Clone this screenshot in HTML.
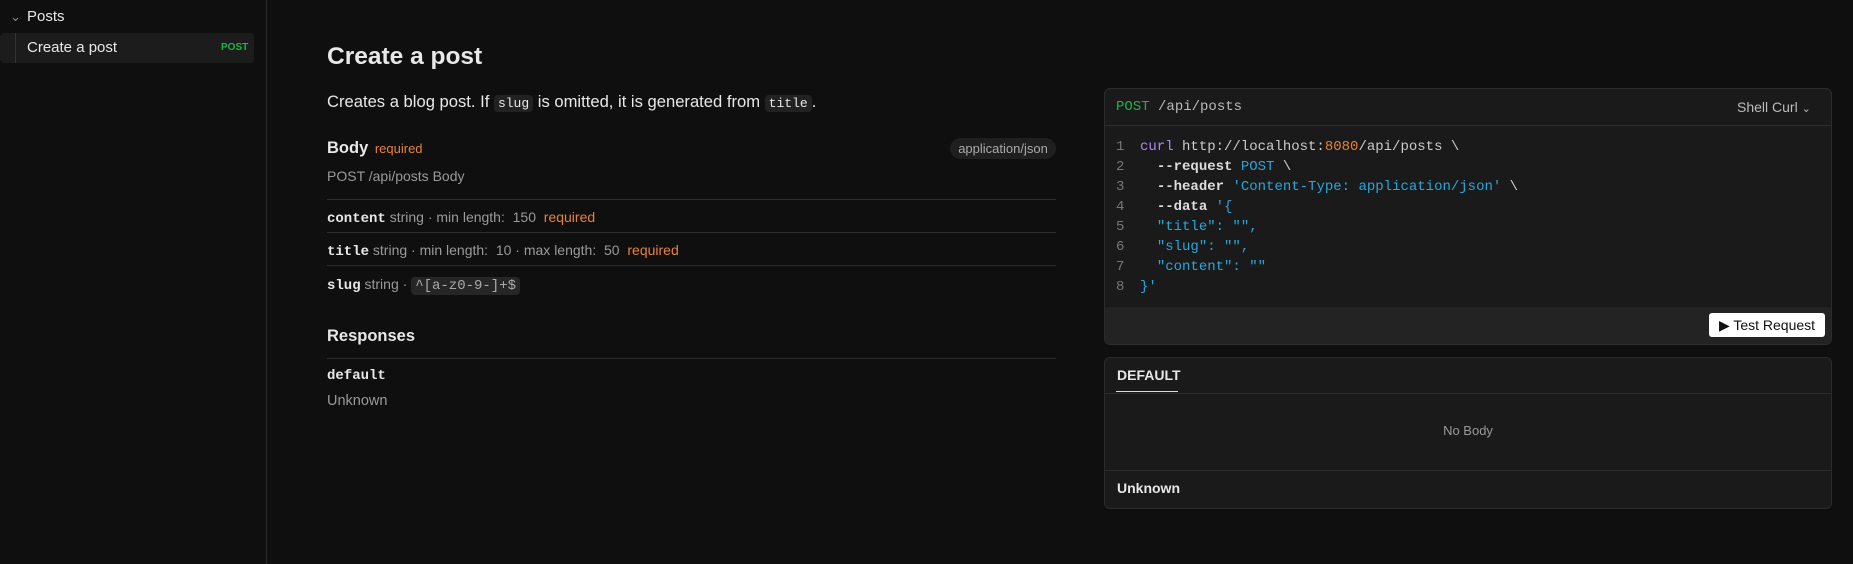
<!DOCTYPE html>
<html><head><meta charset="utf-8"><style>
*{box-sizing:border-box;margin:0;padding:0}
body{width:1853px;height:564px;background:#0f0f0f;color:#e8e8e8;font-family:"Liberation Sans",sans-serif;position:relative;overflow:hidden}
.a{position:absolute;white-space:nowrap}
.m{font-family:"Liberation Mono",monospace}
.mut{color:#9a9a9a}
.or{color:#e8823a}
.hr{position:absolute;height:1px;background:#2e2e2e}
code{font-family:"Liberation Mono",monospace;background:#222;border-radius:4px;padding:1px 4px;font-size:13px}
.cl{position:absolute;left:1116px;font-family:"Liberation Mono",monospace;font-size:14px;line-height:20px;white-space:pre;color:#ccc}
.ln{color:#777;display:inline-block;width:24px}
.b{color:#2aa6dc}
</style></head><body>
<div class="a" style="left:266px;top:0;width:1px;height:564px;background:#2a2a2a"></div>
<div class="a" style="left:10px;top:8px;line-height:18px;font-size:13px;color:#888">&#8964;</div>
<div class="a" style="left:27px;top:8px;line-height:18px;font-size:15px">Posts</div>
<div class="a" style="left:0;top:33px;width:254px;height:30px;background:#1c1c1c;border-radius:4px"></div>
<div class="a" style="left:15px;top:33px;width:1px;height:30px;background:#333"></div>
<div class="a" style="left:27px;top:39px;line-height:18px;font-size:15px">Create a post</div>
<div class="a" style="left:221px;top:41px;line-height:14px;font-size:10px;font-weight:bold;color:#22b24c">POST</div>

<div class="a" style="left:327px;top:43px;line-height:28px;font-size:24.5px;font-weight:bold">Create a post</div>
<div class="a" style="left:327px;top:92px;line-height:20px;font-size:16.6px">Creates a blog post. If <code>slug</code> is omitted, it is generated from <code>title</code>.</div>
<div class="a" style="left:327px;top:138px;line-height:20px;font-size:16.5px;font-weight:bold">Body <span class="or" style="font-size:13px;font-weight:normal;margin-left:2px">required</span></div>
<div class="a" style="left:950px;top:138px;width:106px;height:21px;line-height:21px;border-radius:11px;background:#1f1f1f;color:#aaa;font-size:13px;text-align:center">application/json</div>
<div class="a mut" style="left:327px;top:166px;line-height:20px;font-size:14px">POST /api/posts Body</div>
<div class="hr" style="left:327px;top:199px;width:729px"></div>
<div class="a" style="left:327px;top:207px;line-height:20px;font-size:14px"><b class="m">content</b> <span class="mut" style="font-size:14px">string · min length:&nbsp; 150</span> &nbsp;<span class="or" style="font-size:14px">required</span></div>
<div class="hr" style="left:327px;top:232px;width:729px"></div>
<div class="a" style="left:327px;top:240px;line-height:20px;font-size:14px"><b class="m">title</b> <span class="mut" style="font-size:14px">string · min length:&nbsp; 10 · max length:&nbsp; 50</span> &nbsp;<span class="or" style="font-size:14px">required</span></div>
<div class="hr" style="left:327px;top:265px;width:729px"></div>
<div class="a" style="left:327px;top:274px;line-height:20px;font-size:14px"><b class="m">slug</b> <span class="mut" style="font-size:14px">string · </span><code style="color:#aaa;background:#262626;font-size:14px">^[a-z0-9-]+$</code></div>
<div class="a" style="left:327px;top:325px;line-height:22px;font-size:16.5px;font-weight:bold">Responses</div>
<div class="hr" style="left:327px;top:358px;width:729px"></div>
<div class="a m" style="left:327px;top:366px;line-height:20px;font-size:14px;font-weight:bold">default</div>
<div class="a mut" style="left:327px;top:391px;line-height:20px;font-size:14.5px">Unknown</div>

<div class="a" style="left:1104px;top:88px;width:728px;height:257px;background:#1a1a1a;border:1px solid #2c2c2c;border-radius:6px;overflow:hidden">
 <div style="position:absolute;left:0;top:36px;width:100%;height:1px;background:#2c2c2c"></div>
 <div style="position:absolute;left:0;top:218px;width:100%;height:40px;background:#232323"></div>
</div>
<div class="a m" style="left:1116px;top:97px;line-height:20px;font-size:14px"><span style="color:#22b24c">POST</span> <span style="color:#bbb">/api/posts</span></div>
<div class="a" style="left:1737px;top:97px;line-height:20px;font-size:14px;color:#bbb">Shell Curl <span style="font-size:11px">&#8964;</span></div>
<div class="cl" style="top:137px"><span class="ln">1</span><span style="color:#a98bf0">curl</span> http://localhost:<span class="or">8080</span>/api/posts \
<span class="ln">2</span>  <b style="color:#ddd">--request</b> <span class="b">POST</span> \
<span class="ln">3</span>  <b style="color:#ddd">--header</b> <span class="b">'Content-Type: application/json'</span> \
<span class="ln">4</span>  <b style="color:#ddd">--data</b> <span class="b">'{</span>
<span class="ln">5</span>  <span class="b">"title": "",</span>
<span class="ln">6</span>  <span class="b">"slug": "",</span>
<span class="ln">7</span>  <span class="b">"content": ""</span>
<span class="ln">8</span><span class="b">}'</span></div>
<div class="a" style="left:1709px;top:313px;width:116px;height:24px;background:#fff;border-radius:3px;color:#111;font-size:14px;line-height:24px;text-align:center">&#9654; Test Request</div>

<div class="a" style="left:1104px;top:357px;width:728px;height:152px;background:#1a1a1a;border:1px solid #2c2c2c;border-radius:6px">
 <div style="position:absolute;left:0;top:35px;width:100%;height:1px;background:#2c2c2c"></div>
 <div style="position:absolute;left:0;top:112px;width:100%;height:1px;background:#2c2c2c"></div>
</div>
<div class="a" style="left:1117px;top:366px;line-height:18px;font-size:14px;font-weight:bold">DEFAULT</div>
<div class="a" style="left:1116px;top:391px;width:62px;height:1px;background:#ddd"></div>
<div class="a mut" style="left:1104px;width:728px;text-align:center;top:422px;line-height:18px;font-size:13px">No Body</div>
<div class="a" style="left:1117px;top:479px;line-height:18px;font-size:14px;font-weight:bold">Unknown</div>
</body></html>
